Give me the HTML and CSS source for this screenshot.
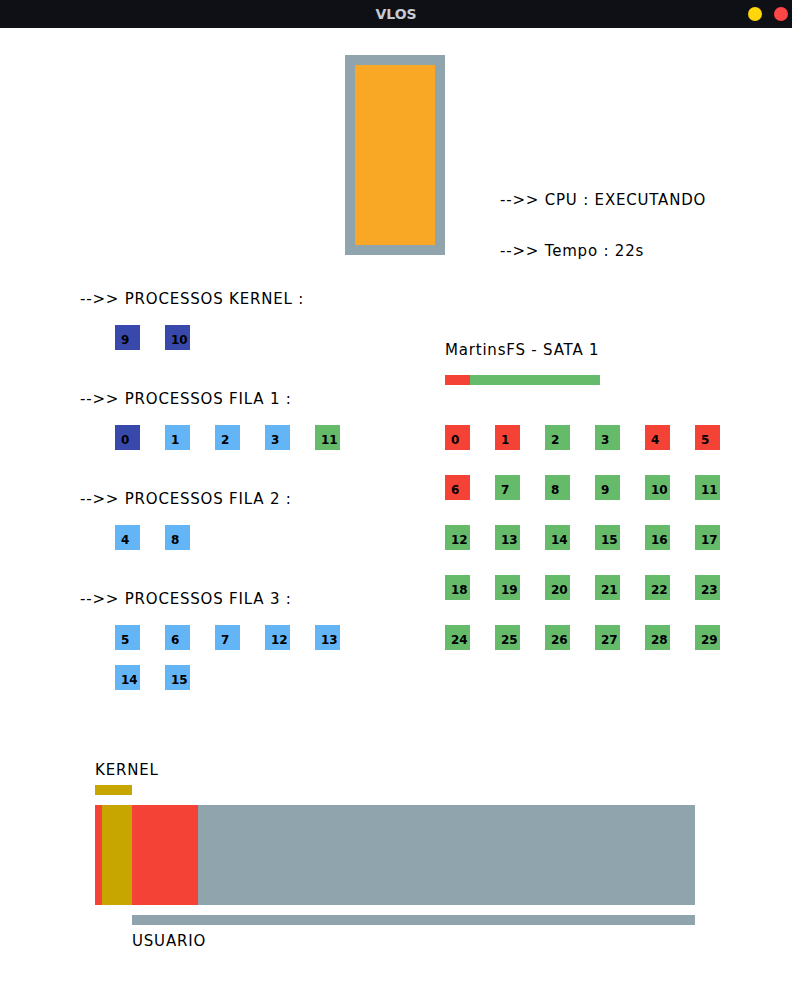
FILE: index.html
```html
<!DOCTYPE html>
<html lang="pt">
<head>
  <meta charset="UTF-8" />
  <title>VLOS</title>
  <link rel="stylesheet" href="styles.css">
</head>
<body>
  <div class="titlebar">
    <span></span>
    <span class="titulo">VLOS</span>
    <div class="botoes">
      <span class="bola amarela"></span>
      <span class="bola vermelha"></span>
    </div>
  </div>

  <div class="topo">
    <div class="cpu"></div>
    <div class="cpu-info">
      <p>-->> CPU : EXECUTANDO</p>
      <p class="tempo">-->> Tempo : 22s</p>
    </div>
  </div>

  <div class="meio">
    <div class="filas">
      <div class="grupo">
        <p>-->> PROCESSOS KERNEL :</p>
        <div class="quadros">
          <span class="q kernel">9</span>
          <span class="q kernel">10</span>
        </div>
      </div>
      <div class="grupo">
        <p>-->> PROCESSOS FILA 1 :</p>
        <div class="quadros">
          <span class="q kernel">0</span>
          <span class="q pronto">1</span>
          <span class="q pronto">2</span>
          <span class="q pronto">3</span>
          <span class="q ok">11</span>
        </div>
      </div>
      <div class="grupo">
        <p>-->> PROCESSOS FILA 2 :</p>
        <div class="quadros">
          <span class="q pronto">4</span>
          <span class="q pronto">8</span>
        </div>
      </div>
      <div class="grupo">
        <p>-->> PROCESSOS FILA 3 :</p>
        <div class="quadros">
          <span class="q pronto">5</span>
          <span class="q pronto">6</span>
          <span class="q pronto">7</span>
          <span class="q pronto">12</span>
          <span class="q pronto">13</span>
          <span class="q pronto">14</span>
          <span class="q pronto">15</span>
        </div>
      </div>
    </div>

    <div class="disco">
      <p>MartinsFS - SATA 1</p>
      <div class="uso">
        <span class="uso-ocupado"></span>
      </div>
      <div class="blocos">
        <span class="q cheio">0</span>
        <span class="q cheio">1</span>
        <span class="q ok">2</span>
        <span class="q ok">3</span>
        <span class="q cheio">4</span>
        <span class="q cheio">5</span>
        <span class="q cheio">6</span>
        <span class="q ok">7</span>
        <span class="q ok">8</span>
        <span class="q ok">9</span>
        <span class="q ok">10</span>
        <span class="q ok">11</span>
        <span class="q ok">12</span>
        <span class="q ok">13</span>
        <span class="q ok">14</span>
        <span class="q ok">15</span>
        <span class="q ok">16</span>
        <span class="q ok">17</span>
        <span class="q ok">18</span>
        <span class="q ok">19</span>
        <span class="q ok">20</span>
        <span class="q ok">21</span>
        <span class="q ok">22</span>
        <span class="q ok">23</span>
        <span class="q ok">24</span>
        <span class="q ok">25</span>
        <span class="q ok">26</span>
        <span class="q ok">27</span>
        <span class="q ok">28</span>
        <span class="q ok">29</span>
      </div>
    </div>
  </div>

  <div class="memoria">
    <p>KERNEL</p>
    <div class="barra-kernel"></div>
    <div class="ram">
      <span class="seg vermelho" style="width: 7px"></span>
      <span class="seg dourado" style="width: 30px"></span>
      <span class="seg vermelho" style="width: 66px"></span>
    </div>
    <div class="barra-usuario"></div>
    <p class="usuario">USUARIO</p>
  </div>
</body>
</html>
```

FILE: styles.css
```css
body {
  margin: 0;
  background: #fff;
  color: #000;
  font-family: "DejaVu Sans", Verdana, sans-serif;
  font-size: 15px;
}
p {
  margin: 0;
  line-height: 20px;
  white-space: nowrap;
  letter-spacing: 0.8px;
}

/* barra da janela */
.titlebar {
  height: 28px;
  background: #0e1015;
  display: grid;
  grid-template-columns: 1fr auto 1fr;
  align-items: center;
}
.titulo {
  color: #c6cbd3;
  font-weight: bold;
  font-size: 14px;
}
.botoes {
  justify-self: end;
  display: flex;
  gap: 12px;
  margin-right: 4px;
}
.bola {
  width: 14px;
  height: 14px;
  border-radius: 50%;
}
.amarela { background: #ffd60a; }
.vermelha { background: #ff4545; }

/* CPU */
.topo {
  display: flex;
  height: 227px;
  padding-left: 345px;
  align-items: flex-end;
}
.cpu {
  width: 100px;
  height: 200px;
  box-sizing: border-box;
  border: 10px solid #90a4ae;
  background: #f9a825;
  align-self: flex-end;
}
.cpu-info {
  margin-left: 55px;
  align-self: flex-start;
  padding-top: 162px;
}
.tempo {
  margin-top: 31px;
}

/* filas e disco */
.meio {
  display: flex;
  padding: 34px 0 0 80px;
}
.filas {
  width: 365px;
}
.grupo {
  margin-bottom: 39px;
}
.grupo:last-child {
  margin-bottom: 0;
}
.quadros {
  display: flex;
  flex-wrap: wrap;
  gap: 15px 25px;
  margin: 16px 0 0 35px;
  width: 225px;
}
.q {
  width: 25px;
  height: 25px;
  box-sizing: border-box;
  padding: 9px 0 0 6px;
  font-size: 12px;
  font-weight: bold;
  line-height: 13px;
}
.kernel { background: #3949ab; }
.pronto { background: #64b5f6; }
.ok { background: #66bb6a; }
.cheio { background: #f44336; }

.disco {
  padding-top: 51px;
}
.uso {
  width: 155px;
  height: 10px;
  margin-top: 15px;
  background: #66bb6a;
}
.uso-ocupado {
  display: block;
  width: 25px;
  height: 10px;
  background: #f44336;
}
.blocos {
  display: grid;
  grid-template-columns: repeat(6, 25px);
  gap: 25px;
  margin-top: 40px;
}

/* memoria */
.memoria {
  padding: 70px 0 0 95px;
}
.barra-kernel {
  width: 37px;
  height: 10px;
  margin-top: 5px;
  background: #c7a600;
}
.ram {
  display: flex;
  width: 600px;
  height: 100px;
  margin-top: 10px;
  background: #90a4ae;
}
.seg { height: 100%; }
.vermelho { background: #f44336; }
.dourado { background: #c7a600; }
.barra-usuario {
  width: 563px;
  height: 10px;
  margin: 10px 0 0 37px;
  background: #90a4ae;
}
.usuario {
  margin: 6px 0 0 37px;
}
```
